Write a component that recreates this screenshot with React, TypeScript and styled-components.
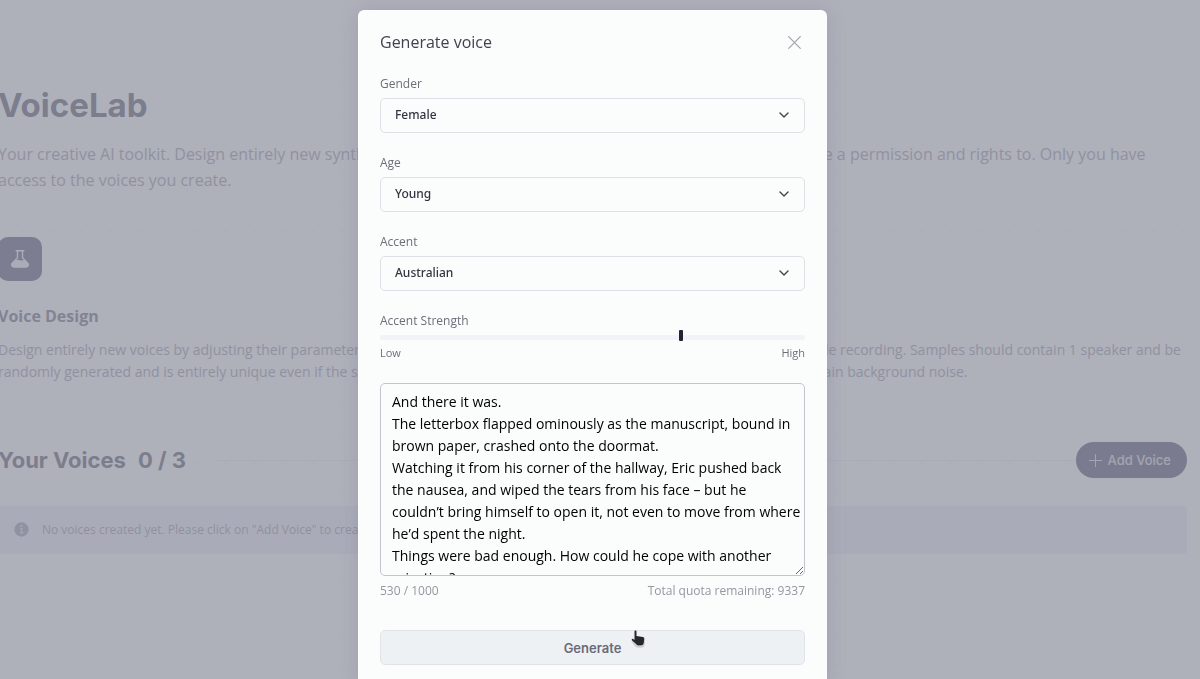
import React, { useState } from 'react';
import styled, { createGlobalStyle } from 'styled-components';

const sans = `'Open Sans', 'Noto Sans', sans-serif`;
const medium = `'Noto Sans', 'Open Sans', sans-serif`;
const display = `Inter, 'Open Sans', sans-serif`;

const GlobalStyle = createGlobalStyle`
  * { box-sizing: border-box; }
  html, body { margin: 0; height: 100%; overflow: hidden; }
  body { font-family: ${sans}; background: #fff; }
  h1, h2, h3, p { margin: 0; }
`;

const Page = styled.main`
  min-height: 100vh;
  margin-left: -2px;
  padding: 85px 13px 0 0;
  background-image: radial-gradient(circle at 25px 28px, #fafafb 1px, transparent 2px);
  background-size: 29px 29px;
`;

const PageTitle = styled.h1`
  font: 700 33px/40px ${display};
  color: #828090;
`;

const Lead = styled.p`
  margin-top: 16px;
  font-size: 16px;
  line-height: 26px;
  color: #b4b2bd;
`;

const Features = styled.div`
  display: grid;
  grid-template-columns: 1fr 1fr;
  gap: 44px;
  margin-top: 44px;
`;

const FeatureIcon = styled.div`
  display: grid;
  place-items: center;
  width: 44px;
  height: 44px;
  border-radius: 10px;
  background: #828096;
  color: #f4f4f8;
`;

const FeatureTitle = styled.h3`
  margin-top: 24px;
  font-size: 16px;
  line-height: 22px;
  font-weight: 700;
  color: #928f9f;
`;

const FeatureText = styled.p`
  margin-top: 12px;
  font-size: 14px;
  line-height: 22px;
  color: #b4b2bd;
`;

const SectionHead = styled.div`
  display: flex;
  align-items: center;
  margin-top: 59px;
`;

const SectionTitle = styled.h2`
  display: flex;
  gap: 12px;
  font: 700 22px/36px ${display};
  color: #828090;
`;

const Divider = styled.div`
  flex: 1;
  height: 1px;
  margin-left: 30px;
  background: #f3f3f6;
`;

const AddButton = styled.button`
  display: flex;
  align-items: center;
  gap: 6px;
  height: 36px;
  padding: 0 16px 0 13px;
  border: 0;
  border-radius: 18px;
  background: #7d7b92;
  color: #e2e2ea;
  font: 500 13px/20px ${display};
`;

const Notice = styled.div`
  display: flex;
  align-items: center;
  gap: 13px;
  height: 48px;
  margin-top: 28px;
  padding: 0 0 2px 16px;
  border-radius: 4px;
  background: #f3f5f9;
  font-size: 12px;
  color: #b2b0bb;
`;

const Overlay = styled.div`
  position: fixed;
  inset: 0;
  display: flex;
  justify-content: center;
  align-items: flex-start;
  padding: 10px 15px 0 0;
  background: rgba(120, 123, 140, 0.6);
`;

const Dialog = styled.div`
  width: min(469px, 100%);
  padding: 22px;
  border-radius: 6px;
  background: #fbfdfc;
  box-shadow: 0 0 20px rgba(90, 88, 120, 0.2);
`;

const DialogHead = styled.header`
  display: flex;
  align-items: center;
  justify-content: space-between;
  height: 20px;
`;

const DialogTitle = styled.h2`
  font-size: 16px;
  line-height: 20px;
  font-weight: 400;
  color: #43414f;
`;

const CloseButton = styled.button`
  display: grid;
  place-items: center;
  width: 21px;
  height: 21px;
  padding: 0;
  border: 0;
  background: none;
  color: #a3a2ab;
`;

const Form = styled.form`
  display: flex;
  flex-direction: column;
  gap: 22px;
  margin-top: 24px;
`;

const Field = styled.div`
  display: flex;
  flex-direction: column;
`;

const Label = styled.label`
  font-size: 12px;
  line-height: 16px;
  color: #6e6d7a;
`;

const SelectWrap = styled.div`
  position: relative;
  margin-top: 6px;
  color: #43414f;

  svg {
    position: absolute;
    right: 15px;
    top: 11px;
    pointer-events: none;
  }
`;

const Select = styled.select`
  appearance: none;
  display: block;
  width: 100%;
  height: 35px;
  padding: 0 36px 2px 14px;
  border: 1px solid #dfe0e6;
  border-radius: 5px;
  background: transparent;
  color: #353342;
  font: 500 12px/16px ${medium};
`;

const Range = styled.input`
  appearance: none;
  width: 100%;
  height: 16px;
  margin: 0;
  background: none;

  &::-webkit-slider-runnable-track {
    height: 5px;
    border-radius: 2px;
    background: #f2f2f8;
  }

  &::-webkit-slider-thumb {
    appearance: none;
    width: 4px;
    height: 11px;
    margin-top: -5px;
    border-radius: 1px;
    background: #232233;
  }
`;

const Ends = styled.div<{ $muted?: boolean }>`
  display: flex;
  justify-content: space-between;
  margin-top: ${(p) => (p.$muted ? '7px' : '0')};
  font-size: ${(p) => (p.$muted ? '12px' : '11px')};
  line-height: 16px;
  color: ${(p) => (p.$muted ? '#9796a0' : '#6e6d7a')};
`;

const TextArea = styled.textarea`
  display: block;
  width: 100%;
  height: 193px;
  padding: 7px 3px 0 11px;
  border: 1px solid #c5c4ce;
  border-radius: 5px;
  outline: none;
  resize: vertical;
  background: transparent;
  color: #000;
  font: 400 14px/22px ${sans};
`;

const Actions = styled.div`
  position: relative;
  margin-top: 9px;
`;

const Submit = styled.button`
  display: block;
  width: 100%;
  height: 35px;
  border: 1px solid #e0e3e8;
  border-radius: 5px;
  background: #edf1f4;
  color: #6b6a79;
  font: 600 13px/20px ${display};
`;

const Pointer = styled.svg`
  position: absolute;
  left: 59%;
  top: 0;
  pointer-events: none;
`;

const Chevron = () => (
  <svg width="12" height="12" viewBox="0 0 12 12" fill="none" stroke="currentColor" strokeWidth="1.4" strokeLinecap="round" strokeLinejoin="round">
    <path d="M2 4l4 4 4-4" />
  </svg>
);

const Flask = () => (
  <svg width="20" height="20" viewBox="0 0 20 20" fill="none" stroke="currentColor" strokeWidth="1.4" strokeLinecap="round" strokeLinejoin="round">
    <path d="M6.2 1.7h7.6M7.5 1.7v7.1l-5 5.2c-1.6 1.9-.6 4 1.6 4h11.8c2.2 0 3.2-2.1 1.6-4l-5-5.2V1.7" />
    <path d="M5.2 11.7c2.4-1 4.2 1.4 9.6 0l3 3.2c.6 1.6-.4 2.6-1.8 2.6H4c-1.4 0-2.4-1-1.8-2.6z" fill="currentColor" />
  </svg>
);

const Info = () => (
  <svg width="15" height="15" viewBox="0 0 15 15">
    <circle cx="7.5" cy="7.5" r="7.2" fill="#b6b4c0" />
    <path d="M6.2 6.5h1.5v4M5.8 10.8h3.8" stroke="#ececf2" strokeWidth="1.2" fill="none" />
    <circle cx="7.4" cy="4" r="1" fill="#ececf2" />
  </svg>
);

const choices = [
  { id: 'gender', label: 'Gender', options: ['Female', 'Male'] },
  { id: 'age', label: 'Age', options: ['Young', 'Middle Aged', 'Old'] },
  { id: 'accent', label: 'Accent', options: ['Australian', 'American', 'British'] },
];

const sample = `And there it was.
The letterbox flapped ominously as the manuscript, bound in brown paper, crashed onto the doormat.
Watching it from his corner of the hallway, Eric pushed back the nausea, and wiped the tears from his face – but he couldn’t bring himself to open it, not even to move from where he’d spent the night.
Things were bad enough. How could he cope with another rejection?`;

export default function App() {
  const [strength, setStrength] = useState(71);
  const [text, setText] = useState(sample);

  return (
    <>
      <GlobalStyle />
      <Page>
        <PageTitle>VoiceLab</PageTitle>
        <Lead>
          Your creative AI toolkit. Design entirely new synthetic voices from scratch. Clone your own voice or one you have
          a permission and rights to. Only you have access to the voices you create.
        </Lead>
        <Features>
          <section>
            <FeatureIcon><Flask /></FeatureIcon>
            <FeatureTitle>Voice Design</FeatureTitle>
            <FeatureText>
              Design entirely new voices by adjusting their parameters. Every voice you create is randomly generated and is
              entirely unique even if the same settings are used.
            </FeatureText>
          </section>
          <section>
            <FeatureIcon />
            <FeatureTitle>Voice Cloning</FeatureTitle>
            <FeatureText>
              Clone a voice from a clean sample recording. Samples should contain 1 speaker and be over 1 minute long and not
              contain background noise.
            </FeatureText>
          </section>
        </Features>
        <SectionHead>
          <SectionTitle><span>Your Voices</span><span>0 / 3</span></SectionTitle>
          <Divider />
          <AddButton type="button">
            <svg width="13" height="13" viewBox="0 0 13 13" stroke="currentColor" strokeWidth="1"><path d="M6.5 0v13M0 6.5h13" /></svg>
            Add Voice
          </AddButton>
        </SectionHead>
        <Notice>
          <Info />
          No voices created yet. Please click on "Add Voice" to create your first voice.
        </Notice>
      </Page>

      <Overlay>
        <Dialog role="dialog" aria-modal="true" aria-labelledby="dialog-title">
          <DialogHead>
            <DialogTitle id="dialog-title">Generate voice</DialogTitle>
            <CloseButton type="button" aria-label="Close">
              <svg width="13" height="13" viewBox="0 0 13 13" stroke="currentColor" strokeWidth="1.2" strokeLinecap="round"><path d="M.7.7l11.6 11.6M12.3.7L.7 12.3" /></svg>
            </CloseButton>
          </DialogHead>
          <Form onSubmit={(e) => e.preventDefault()}>
            {choices.map((c) => (
              <Field key={c.id}>
                <Label htmlFor={c.id}>{c.label}</Label>
                <SelectWrap>
                  <Select id={c.id}>
                    {c.options.map((o) => <option key={o}>{o}</option>)}
                  </Select>
                  <Chevron />
                </SelectWrap>
              </Field>
            ))}
            <Field>
              <Label htmlFor="strength">Accent Strength</Label>
              <Range id="strength" type="range" value={strength} onChange={(e) => setStrength(+e.target.value)} />
              <Ends><span>Low</span><span>High</span></Ends>
            </Field>
            <Field>
              <TextArea aria-label="Sample text" value={text} onChange={(e) => setText(e.target.value)} />
              <Ends $muted><span>530 / 1000</span><span>Total quota remaining: 9337</span></Ends>
            </Field>
            <Actions>
              <Submit type="submit">Generate</Submit>
              <Pointer width="14" height="18" viewBox="0 0 14 18">
                <path d="M1 10.5l3 4.5c1 1.5 2 2 4 2h2c2 0 3-1.5 3-3.5V8" fill="none" stroke="#c9ccd0" strokeWidth="1.5" />
                <path d="M3.5 1.5c0-1.3 2-1.3 2 0V6l6.3 1c1 .2 1.5.8 1.4 1.8l-.4 4c-.2 1.6-1.2 2.7-2.8 2.7H8c-1.3 0-2.2-.5-3-1.5L.9 10.3C.2 9.3 1.4 8.3 2.3 9l1.2 1z" fill="#26262c" />
              </Pointer>
            </Actions>
          </Form>
        </Dialog>
      </Overlay>
    </>
  );
}
